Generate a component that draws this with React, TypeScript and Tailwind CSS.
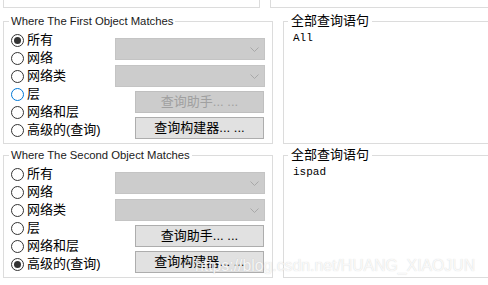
import React from "react";

function Radio({ label, checked, focus }: { label: string; checked?: boolean; focus?: boolean }) {
  return (
    <div className="flex items-center h-[18px]">
      <span
        className={
          focus
            ? "w-[13px] h-[13px] rounded-full border border-[#0078d7] bg-white flex items-center justify-center"
            : "w-[13px] h-[13px] rounded-full border border-[#333333] bg-white flex items-center justify-center"
        }
      >
        {checked && <span className="w-[7px] h-[7px] rounded-full bg-[#333333]" />}
      </span>
      <span className="ml-[3px] text-[13px] leading-[18px] text-black">{label}</span>
    </div>
  );
}

function Combo() {
  return (
    <div className="w-[150px] h-[22px] bg-[#cccccc] border border-[#c4c4c4] flex items-center justify-end pr-[5px]">
      <svg width="9" height="5" viewBox="0 0 9 5">
        <path d="M0.5 0.5 L4.5 4.5 L8.5 0.5" stroke="#a8a8a8" strokeWidth="1" fill="none" />
      </svg>
    </div>
  );
}

function Btn({ label, disabled }: { label: string; disabled?: boolean }) {
  return (
    <div
      className={
        disabled
          ? "w-[129px] h-[22px] mr-[1px] bg-[#cccccc] border border-[#bfbfbf] text-[#a0a0a0] flex items-center justify-center text-[13px]"
          : "w-[129px] h-[22px] mr-[1px] bg-[#e1e1e1] border border-[#adadad] text-black flex items-center justify-center text-[13px]"
      }
    >
      {label}
    </div>
  );
}

function Group({ title, sel, focusIdx, helperDisabled }: { title: string; sel: number; focusIdx?: number; helperDisabled?: boolean }) {
  const labels = ["所有", "网络", "网络类", "层", "网络和层", "高级的(查询)"];
  return (
    <div className="relative border border-[#dcdcdc] h-[123px] w-[270px]">
      <span className="absolute left-[5px] -top-[9px] px-[2px] bg-white text-[11.3px] leading-[16px] text-[#1a1a1a]">
        {title}
      </span>
      <div className="flex">
        <div className="pt-[9px] pl-[7px] flex flex-col">
          {labels.map((l, i) => (
            <Radio key={l} label={l} checked={i === sel} focus={i === focusIdx} />
          ))}
        </div>
        <div className="flex-1 flex flex-col items-end pr-[7px] pt-[16px]">
          <Combo />
          <div className="h-[5px]" />
          <Combo />
          <div className="h-[4px]" />
          <Btn label="查询助手... ..." disabled={helperDisabled} />
          <div className="h-[4px]" />
          <Btn label="查询构建器... ..." />
        </div>
      </div>
    </div>
  );
}

function QueryBox({ text }: { text: string }) {
  return (
    <div className="relative border border-[#dcdcdc] h-[123px] w-[230px]">
      <span className="absolute left-[4px] -top-[9px] px-[3px] bg-white text-[13px] leading-[16px] text-black">
        全部查询语句
      </span>
      <div className="pt-[9px] pl-[9px] font-['Liberation_Mono',monospace] text-[11px] leading-[14px] text-black">
        {text}
      </div>
    </div>
  );
}

export default function App() {
  return (
    <div className="relative w-[488px] h-[285px] overflow-hidden bg-white font-['Liberation_Sans','Noto_Sans_CJK_SC',sans-serif]">
      <div className="flex">
        <div className="ml-[3px] w-[270px] h-[8px] border-l border-r border-b border-[#dcdcdc]" />
        <div className="ml-[10px] w-[230px] h-[8px] border-l border-b border-[#dcdcdc]" />
      </div>
      <div className="flex mt-[13px]">
        <div className="ml-[3px] flex flex-col">
          <Group title="Where The First Object Matches" sel={0} focusIdx={3} helperDisabled />
          <div className="h-[11px]" />
          <Group title="Where The Second Object Matches" sel={5} />
        </div>
        <div className="ml-[10px] flex flex-col">
          <QueryBox text="All" />
          <div className="h-[11px]" />
          <QueryBox text="ispad" />
        </div>
      </div>
      <div
        className="absolute left-[195px] top-[256px] text-[15.8px] leading-[20px] text-[rgba(255,255,255,0.85)] whitespace-nowrap"
        style={{ textShadow: "0 0 1px rgba(150,150,150,0.45)" }}
      >
        https://blog.csdn.net/HUANG_XIAOJUN
      </div>
    </div>
  );
}
